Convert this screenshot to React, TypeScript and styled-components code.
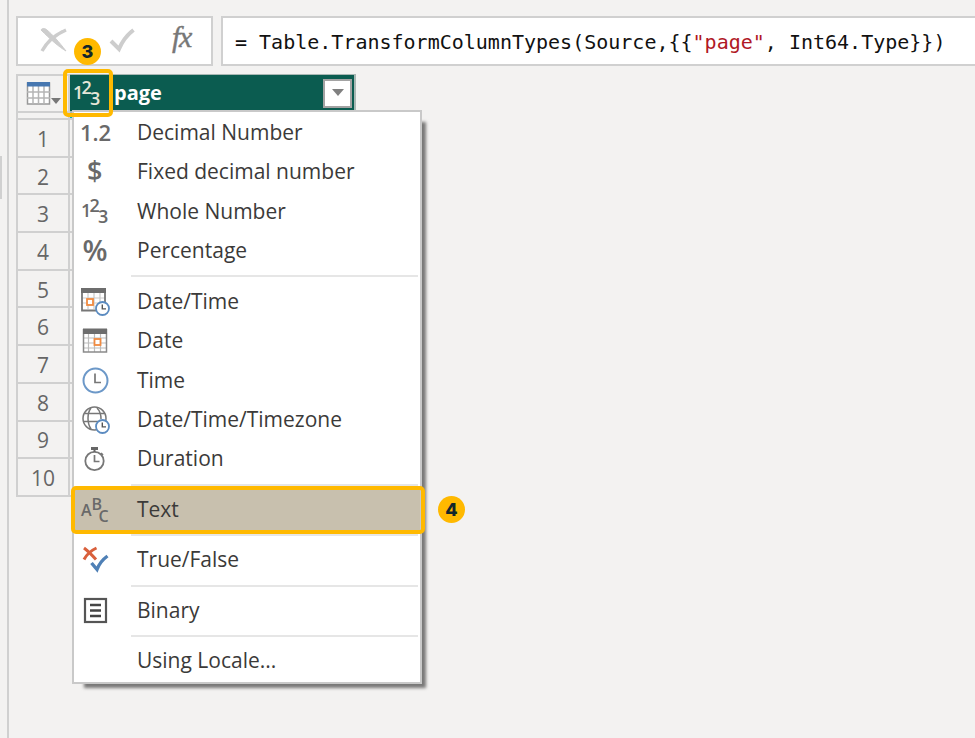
import React from "react";
import styled, { createGlobalStyle } from "styled-components";

const sans = `"Open Sans", "Noto Sans", sans-serif`;
const amber = "#ffb900";
const line = "#d0d0d0";

const GlobalStyle = createGlobalStyle`
  * { box-sizing: border-box; }
  body { margin: 0; background: #f3f2f1; font-family: ${sans}; }
  button { font: inherit; padding: 0; border: 0; background: none; color: inherit; }
`;

const Page = styled.div`
  display: flex;
  min-height: 100vh;
  background: #f3f2f1;
  overflow: hidden;
`;

const Rail = styled.aside`
  flex: 0 0 9px;
  border-right: 2px solid ${line};
  padding-top: 156px;
`;

const RailHandle = styled.div`
  width: 2px;
  height: 43px;
  background: #d0d0d0;
`;

const Main = styled.main`
  flex: 1;
  min-width: 0;
  padding: 16px 0 0 7px;
`;

const FormulaBar = styled.div`
  display: flex;
  gap: 8px;
`;

const FormulaActions = styled.div`
  display: grid;
  grid-template-columns: 72px 64px 1fr;
  flex: 0 0 197px;
  height: 50px;
  border: 2px solid ${line};
  background: #fff;
`;

const ActionButton = styled.button`
  display: flex;
  align-items: center;
  justify-content: center;
`;

const FormulaField = styled.div`
  flex: 1;
  min-width: 0;
  height: 50px;
  border: 2px solid ${line};
  border-right: 0;
  background: #fff;
  padding-left: 12px;
  font: 20px/48px "DejaVu Sans Mono", "Liberation Mono", monospace;
  color: #111;
  white-space: pre;
  overflow: hidden;
`;

const StringToken = styled.span`
  color: #b01825;
`;

const GridArea = styled.div`
  position: relative;
  width: max-content;
  margin-top: 8px;
`;

const Table = styled.table`
  width: 340px;
  height: 423px;
  table-layout: fixed;
  border-collapse: separate;
  border-spacing: 0;
  border-left: 2px solid ${line};
  color: #666;
  font-size: 21px;
  line-height: 24px;
`;

const IndexCol = styled.col`
  width: 52px;
`;

const CornerCell = styled.th`
  height: 39px;
  padding: 0;
  border-top: 2px solid ${line};
  border-right: 2px solid ${line};
  border-bottom: 2px solid ${line};
`;

const TableMenuButton = styled.button`
  display: flex;
  align-items: center;
  margin-left: 8px;
`;

const ColumnHeader = styled.th`
  height: 39px;
  padding: 0;
  border-top: 1px solid #a9b8b4;
  border-right: 2px solid #a9b8b4;
  border-bottom: 2px solid #a9b8b4;
  background: #0b5c50;
  color: #fff;
  font-size: 20px;
`;

const HeaderContent = styled.div`
  display: flex;
  align-items: center;
  padding-right: 2px;
`;

const TypeButton = styled.button`
  position: relative;
  display: flex;
  align-items: center;
  justify-content: center;
  width: 36px;
  height: 32px;
  margin-right: 8px;
  padding-right: 2px;
`;

const ColumnName = styled.span`
  flex: 1;
  text-align: left;
  font-weight: 700;
`;

const FilterButton = styled.button`
  display: flex;
  align-items: center;
  justify-content: center;
  width: 29px;
  height: 29px;
  border: 2px solid #a3a3a3;
  background: #fff;
`;

const QualityCell = styled.td<{ $filled?: boolean }>`
  height: 7px;
  padding: 0;
  border-right: ${(p) => (p.$filled ? 0 : 2)}px solid ${line};
  border-bottom: 2px solid ${line};
  background: ${(p) => (p.$filled ? "#01b8aa" : "transparent")};
`;

const RowNumber = styled.th`
  padding: 2px 0 0 0;
  border-right: 2px solid ${line};
  border-bottom: 2px solid ${line};
  font-weight: 400;
`;

const DataCell = styled.td`
  padding: 0;
  border-bottom: 2px solid ${line};
`;

const Menu = styled.div`
  position: absolute;
  z-index: 1;
  top: 36px;
  left: 56px;
  display: flex;
  flex-direction: column;
  width: 350px;
  min-height: 574px;
  padding: 1px 0;
  border: 2px solid #c9c9c9;
  background: #fff;
  box-shadow: 8px 8px 3px -4px rgba(0, 0, 0, 0.5);
`;

const MenuItem = styled.button<{ $selected?: boolean }>`
  position: relative;
  display: grid;
  grid-template-columns: 42px 1fr;
  column-gap: 21px;
  align-items: center;
  flex: 1 0 auto;
  padding-bottom: 2px;
  text-align: left;
  font-size: 21px;
  line-height: 28px;
  color: #3b3a39;
  background: ${(p) => (p.$selected ? "#c8c0ae" : "transparent")};
`;

const IconSlot = styled.span`
  display: flex;
  justify-content: center;
`;

const Separator = styled.hr`
  flex: 0 0 11px;
  width: auto;
  margin: 0 2px 0 57px;
  border: 0;
  background: linear-gradient(#e6e6e6, #e6e6e6) center / 100% 2px no-repeat;
`;

const Highlight = styled.span<{ $over: "type" | "item" }>`
  position: absolute;
  z-index: 2;
  inset: ${(p) => (p.$over === "type" ? "-8px -7px" : "-4px -5px -4px -3px")};
  border: 4px solid ${amber};
  border-radius: 5px;
  pointer-events: none;
`;

const Badge = styled.span<{ $over: "type" | "item" }>`
  position: absolute;
  z-index: 3;
  ${(p) =>
    p.$over === "type"
      ? "top: -39px; left: 4px;"
      : "top: 6px; right: -45px;"}
  width: 27px;
  height: 27px;
  border-radius: 50%;
  background: ${amber};
  color: #12262b;
  font: 800 18px/27px Inter, sans-serif;
  text-align: center;
`;

const Glyph = styled.text`
  font-family: ${sans};
  fill: currentColor;
`;

const SerifGlyph = styled.text`
  font: italic 30px "Liberation Serif", serif;
  fill: #777;
  stroke: #777;
  stroke-width: 0.4px;
`;

const Svg = styled.svg`
  display: block;
  overflow: visible;
`;

const MenuIcon = ({ children }: { children?: React.ReactNode }) => (
  <Svg width="28" height="28" viewBox="0 0 28 28" fill="none" color="#696969" aria-hidden="true">
    {children}
  </Svg>
);

const WholeGlyphs = () => (
  <>
    <Glyph x="0" y="20" fontSize="18" fontWeight="600">1</Glyph>
    <Glyph x="8.5" y="15" fontSize="18" fontWeight="600">2</Glyph>
    <Glyph x="17" y="26" fontSize="18" fontWeight="600">3</Glyph>
  </>
);

const SmallClock = () => (
  <>
    <circle cx="21.5" cy="21.500" r="6.5" fill="#fff" stroke="#5b8bc0" strokeWidth="1.8" />
    <path d="M21.300 17.500v4.400h3.700" stroke="#555" strokeWidth="1.4" />
  </>
);

const icons: Record<string, React.ReactNode> = {
  decimal: <Glyph x="-1" y="23" fontSize="22" fontWeight="600">1.2</Glyph>,
  fixed: <Glyph x="6" y="24" fontSize="27" fontWeight="600">$</Glyph>,
  whole: <WholeGlyphs />,
  percent: <Glyph x="1.5" y="25" fontSize="29" fontWeight="600">%</Glyph>,
  datetime: (
    <>
      <path d="M7 5v17M13 5v17M19 5v17M1 11h23M1 16h23" stroke="#c9c9c9" strokeWidth="1.2" />
      <path d="M1 2v21.500h15M24 5v10" stroke="#777" strokeWidth="1.8" />
      <path d="M0 1h25v5H0z" fill="#6d6d6d" />
      <rect x="6" y="12" width="6" height="6" fill="#fff" stroke="#f08a40" strokeWidth="1.8" />
      <SmallClock />
    </>
  ),
  date: (
    <>
      <path d="M7.5 7v19M13.5 7v19M19.5 7v19M2 12h24M2 17h24M2 22h24" stroke="#bcbcbc" strokeWidth="1.2" />
      <path d="M2.5 3v23h23V3" stroke="#8a8a8a" strokeWidth="1.5" />
      <path d="M2 2.500h24v5.500H2z" fill="#6d6d6d" />
      <rect x="13.5" y="13" width="6" height="6" fill="#fff" stroke="#f08a40" strokeWidth="1.8" />
    </>
  ),
  time: (
    <>
      <circle cx="14.500" cy="14.500" r="12" stroke="#6c98c8" strokeWidth="2" />
      <path d="M14 7.500v9h6" stroke="#777" strokeWidth="1.7" />
    </>
  ),
  timezone: (
    <>
      <g stroke="#777" strokeWidth="1.5">
        <circle cx="13.500" cy="13.500" r="11.5" />
        <path d="M3.500 8.500h20M2 16.500h22M10 3C6 8 6 18 10 24M16 3c3 3 4 7 4 11" />
      </g>
      <SmallClock />
    </>
  ),
  duration: (
    <>
      <circle cx="13.5" cy="17" r="9.2" stroke="#777" strokeWidth="1.8" />
      <path d="M10 3h7v3h-7zM12.500 5h2v3h-2z" fill="#666" />
      <path d="M20 9l2 2M13.500 11v6.500h5" stroke="#777" strokeWidth="1.7" />
    </>
  ),
  text: (
    <>
      <Glyph x="0" y="21" fontSize="16" fontWeight="600">A</Glyph>
      <Glyph x="10.500" y="15" fontSize="16" fontWeight="600">B</Glyph>
      <Glyph x="17.500" y="27" fontSize="16" fontWeight="600">C</Glyph>
    </>
  ),
  boolean: (
    <>
      <path d="M3 3c4 3 7 6 12 11.500M15.500 3C10 5.500 6 9 3 14.500" stroke="#d9603c" strokeWidth="3" />
      <path d="M10.500 18l5.500 6.500C18 19 21 15 26.500 11" stroke="#4f80b6" strokeWidth="3.4" />
    </>
  ),
  binary: (
    <>
      <rect x="4" y="3" width="21" height="23" stroke="#555" strokeWidth="2.2" />
      <path d="M9 9h11M9 14.500h11M9 20h11" stroke="#444" strokeWidth="2.5" />
    </>
  ),
};

type Entry = { label: string; icon?: string; selected?: boolean };

const groups: Entry[][] = [
  [
    { label: "Decimal Number", icon: "decimal" },
    { label: "Fixed decimal number", icon: "fixed" },
    { label: "Whole Number", icon: "whole" },
    { label: "Percentage", icon: "percent" },
  ],
  [
    { label: "Date/Time", icon: "datetime" },
    { label: "Date", icon: "date" },
    { label: "Time", icon: "time" },
    { label: "Date/Time/Timezone", icon: "timezone" },
    { label: "Duration", icon: "duration" },
  ],
  [{ label: "Text", icon: "text", selected: true }],
  [{ label: "True/False", icon: "boolean" }],
  [{ label: "Binary", icon: "binary" }],
  [{ label: "Using Locale..." }],
];

const rows = Array.from({ length: 10 }, (_, i) => i + 1);

const TypeMenu = () => (
  <Menu role="menu" aria-label="Change type">
    {groups.map((group, index) => (
      <React.Fragment key={group[0].label}>
        {index > 0 && <Separator />}
        {group.map(({ label, icon, selected }) => (
          <MenuItem key={label} type="button" role="menuitem" $selected={selected}>
            <IconSlot>{icon && <MenuIcon>{icons[icon]}</MenuIcon>}</IconSlot>
            <span>{label}</span>
            {selected && (
              <>
                <Highlight $over="item" />
                <Badge $over="item">4</Badge>
              </>
            )}
          </MenuItem>
        ))}
      </React.Fragment>
    ))}
  </Menu>
);

export default function App() {
  return (
    <Page>
      <GlobalStyle />
      <Rail>
        <RailHandle />
      </Rail>
      <Main>
        <FormulaBar>
          <FormulaActions>
            <ActionButton type="button" aria-label="Cancel">
              <Svg width="28" height="28" viewBox="0 0 28 28" aria-hidden="true">
                <path d="M1 3C2 1 5 1 7 3c6 5 12 12 19 21C19 20 10 12 1 3z" fill="#cdcdcd" stroke="#cdcdcd" />
                <path d="M26 3C19 6 8 13 2 24" fill="none" stroke="#cdcdcd" strokeWidth="3.4" />
              </Svg>
            </ActionButton>
            <ActionButton type="button" aria-label="Commit">
              <Svg width="26" height="26" viewBox="0 0 26 26" aria-hidden="true">
                <path d="M2 13l8 8C13 14 18 7 24.500 2" fill="none" stroke="#cdcdcd" strokeWidth="4" />
              </Svg>
            </ActionButton>
            <ActionButton type="button" aria-label="Insert function">
              <Svg width="28" height="30" viewBox="0 0 28 30" aria-hidden="true">
                <SerifGlyph x="3" y="21">f</SerifGlyph>
                <SerifGlyph x="10" y="21">x</SerifGlyph>
              </Svg>
            </ActionButton>
          </FormulaActions>
          <FormulaField role="textbox" aria-label="Formula" contentEditable suppressContentEditableWarning spellCheck={false}>
            {"= Table.TransformColumnTypes(Source,{{"}
            <StringToken>"page"</StringToken>
            {", Int64.Type}})"}
          </FormulaField>
        </FormulaBar>
        <GridArea>
          <Table>
            <colgroup>
              <IndexCol />
              <col />
            </colgroup>
            <thead>
              <tr>
                <CornerCell>
                  <TableMenuButton type="button" aria-label="Table options">
                    <Svg width="36" height="24" viewBox="0 0 36 24" aria-hidden="true">
                      <path d="M1.500 1h22v21h-22z" fill="#fff" stroke="#999" strokeWidth="1.5" />
                      <path d="M7 4v18M12.500 4v18M18 4v18M1 10h23M1 16h23" stroke="#b5b5b5" strokeWidth="1.5" />
                      <path d="M1 0h23v4.500H1z" fill="#4777b0" />
                      <path d="M25 16h10l-5 6z" fill="#777" />
                    </Svg>
                  </TableMenuButton>
                </CornerCell>
                <ColumnHeader scope="col">
                  <HeaderContent>
                    <TypeButton type="button" aria-label="Column type">
                      <Svg width="28" height="28" viewBox="0 0 28 28" color="#e6e6d8" aria-hidden="true">
                        <WholeGlyphs />
                      </Svg>
                      <Highlight $over="type" />
                      <Badge $over="type">3</Badge>
                    </TypeButton>
                    <ColumnName>page</ColumnName>
                    <FilterButton type="button" aria-label="Filter page">
                      <Svg width="12" height="8" viewBox="0 0 12 8" aria-hidden="true">
                        <path d="M0 0h12L6 7z" fill="#808080" />
                      </Svg>
                    </FilterButton>
                  </HeaderContent>
                </ColumnHeader>
              </tr>
              <tr>
                <QualityCell />
                <QualityCell $filled />
              </tr>
            </thead>
            <tbody>
              {rows.map((n) => (
                <tr key={n}>
                  <RowNumber scope="row">{n}</RowNumber>
                  <DataCell />
                </tr>
              ))}
            </tbody>
          </Table>
          <TypeMenu />
        </GridArea>
      </Main>
    </Page>
  );
}
